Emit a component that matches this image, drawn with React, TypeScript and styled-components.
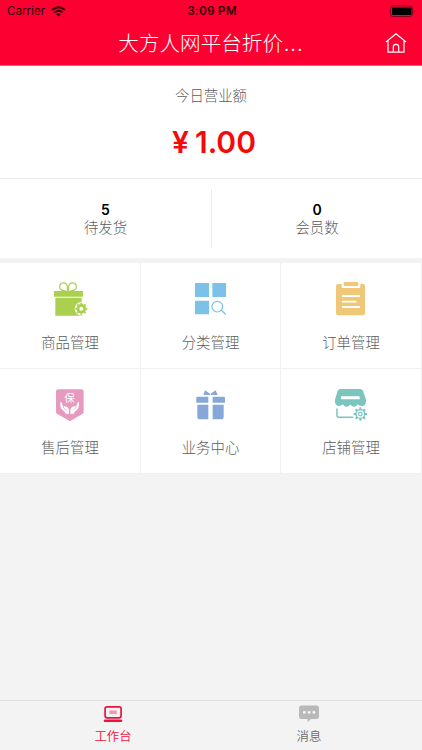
import React from "react";
import styled, { createGlobalStyle } from "styled-components";

const Global = createGlobalStyle`
  * { box-sizing: border-box; }
  body { margin: 0; background: #f3f3f3; }
`;

const Page = styled.div`
  width: 422px;
  height: 750px;
  display: flex;
  flex-direction: column;
  overflow: hidden;
  background: #f3f3f3;
  color: #777;
  font-family: Inter, "Noto Sans CJK SC", sans-serif;
`;

const Header = styled.header`
  height: 66px;
  flex: none;
  background: #fc0032;
  border-bottom: 1px solid #fd5c7a;
`;

const StatusBar = styled.div`
  height: 22px;
  display: grid;
  grid-template-columns: 1fr auto 1fr;
  align-items: center;
  padding: 0 5px 0 7px;
  color: #2c0009;
  font-size: 11.6px;
  line-height: 22px;
`;

const Carrier = styled.div`
  display: flex;
  align-items: center;
  gap: 6px;
`;

const Clock = styled.div`
  font-weight: 600;
  font-size: 11.8px;
  letter-spacing: 0.2px;
`;

const BatterySlot = styled.div`
  display: flex;
  justify-content: flex-end;
`;

const NavBar = styled.div`
  height: 42px;
  display: grid;
  grid-template-columns: 40px 1fr 40px;
  align-items: center;
  padding: 0 6px;
`;

const Title = styled.h1`
  grid-column: 2;
  margin: 0;
  text-align: center;
  color: #fff;
  font: 300 20.6px/40px "Noto Sans CJK SC", sans-serif;
  height: 42px;
  white-space: nowrap;
`;

const Dots = styled.span`
  letter-spacing: 1.4px;
  margin-left: 1px;
`;

const HomeButton = styled.button`
  border: 0;
  padding: 0;
  background: none;
  display: flex;
  justify-content: center;
`;

const Revenue = styled.section`
  height: 113px;
  flex: none;
  background: #fff;
  border-bottom: 1px solid #ececec;
  display: flex;
  flex-direction: column;
  align-items: center;
  padding-top: 19px;
`;

const Label = styled.div`
  font: 300 14.4px/20px "Noto Sans CJK SC", sans-serif;
  color: #5c5c5c;
`;

const Amount = styled.div`
  margin: 17px 0 0 6px;
  display: flex;
  gap: 6px;
  font-size: 30px;
  line-height: 40px;
  font-weight: 600;
  color: #f50a0a;
`;

const Stats = styled.section`
  height: 79px;
  flex: none;
  background: #fff;
  display: grid;
  grid-template-columns: 212px 1fr;
  padding: 10px 0;
`;

const Stat = styled.div<{ $divided?: boolean }>`
  display: flex;
  flex-direction: column;
  align-items: center;
  padding-top: 14px;
  border-right: ${(p) => (p.$divided ? "1px solid #ececec" : "0")};
`;

const StatValue = styled.strong`
  font: 600 14px/14px Inter, sans-serif;
  color: #000;
`;

const Menu = styled.main`
  margin-top: 5px;
  display: grid;
  grid-template-columns: 141px 140px 141px;
  grid-template-rows: 106px 105px;
`;

const MenuItem = styled.div`
  background: #fff;
  border-right: 1px solid #f0f0f0;
  border-bottom: 1px solid #f0f0f0;
  display: flex;
  flex-direction: column;
  align-items: center;
  padding-top: 16px;
  gap: 13px;

  &:nth-child(n + 4) { gap: 12px; }
  &:nth-child(3n + 2) svg { margin-right: 1px; }
  &:nth-child(3n) svg { margin-right: 2px; }
`;

const TabBar = styled.footer`
  margin-top: auto;
  height: 50px;
  border-top: 1px solid #dfdfdf;
  display: grid;
  grid-template-columns: 1fr 1fr;
  justify-items: center;
  padding: 0 15px;
  background: #f3f3f3;
`;

const Tab = styled.div<{ $active?: boolean }>`
  display: flex;
  flex-direction: column;
  align-items: center;
  padding-top: 2px;
  gap: 3px;
  font: 350 12.4px/18px "Noto Sans CJK SC", sans-serif;
  color: ${(p) => (p.$active ? "#e6143e" : "#6c6c6c")};
`;

const ShieldText = styled.text`
  font: 350 32px "Noto Sans CJK SC", sans-serif;
  fill: #fff;
`;

const teeth = [0, 45, 90, 135, 180, 225, 270, 315];

function Gear({ x, y, color, hollow }: { x: number; y: number; color: string; hollow?: boolean }) {
  return (
    <g transform={`translate(${x} ${y})`}>
      {teeth.map((a) => (
        <rect key={a} x={-3} y={hollow ? -20 : -18} width={6} height={8} rx={1} fill={color} transform={`rotate(${a})`} />
      ))}
      <circle r={hollow ? 13 : 10} fill="#fff" stroke={color} strokeWidth={hollow ? 4 : 8} />
      {hollow && <circle r={5.5} fill="#fff" stroke={color} strokeWidth={3.5} />}
    </g>
  );
}

function Goods() {
  return (
    <>
      <g fill="none" stroke="#abcf4e" strokeWidth="3.5">
        <path d="M108 51C96 50 89 46 89 38C89 24 109 22 112 37V51" />
        <path d="M120 51C132 50 139 46 139 38C139 24 119 22 116 37V51" />
      </g>
      <path d="M72 51H159V68H72ZM76 71H155V125H76Z" fill="#abcf4e" />
      <circle cx="154" cy="104" r="20" fill="#fff" />
      <Gear x={154} y={104} color="#abcf4e" />
    </>
  );
}

function Category() {
  return (
    <>
      <path d="M75 27H117V69H75ZM127 27H168V69H127ZM75 80H117V121H75Z" fill="#7cc2e8" />
      <g fill="none" stroke="#7cc2e8" strokeLinecap="round">
        <circle cx="142" cy="98" r="16" strokeWidth="3.5" />
        <path d="M154 109L166 120" strokeWidth="4" />
      </g>
    </>
  );
}

function Order() {
  return (
    <>
      <path d="M84 30H95V38Q95 42 99 42H147Q151 42 151 38V30H160Q165 30 165 36V118Q165 124 159 124H84Q78 124 78 118V36Q78 30 84 30Z" fill="#f0c777" />
      <rect x="101" y="24" width="44" height="12" rx="3" fill="#f0c777" />
      <path d="M96 66H150M96 83H139M96 99H150" stroke="#fff" strokeWidth="5.5" />
    </>
  );
}

function Service() {
  return (
    <>
      <path d="M85 28H155Q161 28 161 34V96Q161 100 157 102L120 124L82 102Q78 100 78 96V34Q78 28 85 28Z" fill="#e79ac0" />
      <ShieldText x="103" y="66">保</ShieldText>
      <g fill="#fff">
        <path d="M91 66Q95 65 97 72L99 80Q108 76 115 84Q118 88 117 101H107Q105 95 98 91Q92 86 91 77Z" />
        <path d="M147 66Q143 65 141 72L139 80Q130 76 123 84Q120 88 121 101H131Q133 95 140 91Q146 86 147 77Z" />
      </g>
      <g fill="none" stroke="#e79ac0" strokeWidth="2">
        <path d="M99 81L109 91M139 81L129 91" />
      </g>
    </>
  );
}

function Business() {
  return (
    <g fill="#86a7d8">
      <path d="M82 50H115V68H79V54Q79 50 82 50ZM128 50H161Q165 50 165 54V68H128ZM82 74H115V118H90Q82 118 82 110ZM128 74H161V110Q161 118 153 118H128Z" />
      <path d="M105 31L120 41V45H100ZM137 31L122 41V45H143Z" />
    </g>
  );
}

function Shop() {
  return (
    <>
      <path d="M91 27H151Q156 27 159 32L168 59Q169 74 160 77Q151 81 143 73Q137 83 127 79L121 74Q114 81 107 80Q102 79 98 73Q91 80 83 77Q73 73 75 59L83 32Q86 27 91 27Z" fill="#7cc4be" />
      <rect x="93" y="49" width="56" height="9" rx="2" fill="#fff" />
      <path d="M81 87V107Q81 112 86 112H128" fill="none" stroke="#7cc4be" strokeWidth="4.5" strokeLinecap="round" />
      <Gear x={151} y={102} color="#7cc4be" hollow />
    </>
  );
}

const entries = [
  { name: "商品管理", Art: Goods },
  { name: "分类管理", Art: Category },
  { name: "订单管理", Art: Order },
  { name: "售后管理", Art: Service },
  { name: "业务中心", Art: Business },
  { name: "店铺管理", Art: Shop },
];

export default function App() {
  return (
    <Page>
      <Global />
      <Header>
        <StatusBar>
          <Carrier>
            Carrier
            <svg width="15" height="11" viewBox="0 0 15 11">
              <g fill="none" stroke="#2c0009" strokeWidth="2">
                <path d="M1 4.1Q7.5 -1.6 14 4.1" />
                <path d="M3.4 6.6Q7.5 3 11.6 6.6" />
              </g>
              <path d="M5.2 8.2Q7.5 6.3 9.8 8.2L7.5 10.6Z" fill="#2c0009" />
            </svg>
          </Carrier>
          <Clock>3:09 PM</Clock>
          <BatterySlot>
            <svg width="28" height="13" viewBox="0 0 28 13">
              <rect x="1.5" y="1" width="22" height="10.5" rx="2.5" fill="none" stroke="#8c001c" />
              <rect x="3" y="2.5" width="19.5" height="7.5" rx="1" fill="#000" />
              <path d="M25.5 4.5Q27 6.3 25.5 8Z" fill="#8c001c" />
            </svg>
          </BatterySlot>
        </StatusBar>
        <NavBar>
          <Title>
            大方人网平台折价<Dots>...</Dots>
          </Title>
          <HomeButton aria-label="首页">
            <svg width="22" height="22" viewBox="0 0 22 22" fill="none" stroke="#fff" strokeWidth="1.2" strokeLinejoin="round" strokeLinecap="round">
              <path d="M1.3 9.7L11 1.7L20.7 9.7M3 8.8V20.2H19V8.8M8.3 20V15Q8.3 12.3 11 12.3Q13.7 12.3 13.7 15V20" />
            </svg>
          </HomeButton>
        </NavBar>
      </Header>
      <Revenue>
        <Label>今日营业额</Label>
        <Amount>
          <span>¥</span>
          <span>1.00</span>
        </Amount>
      </Revenue>
      <Stats>
        <Stat $divided>
          <StatValue>5</StatValue>
          <Label>待发货</Label>
        </Stat>
        <Stat>
          <StatValue>0</StatValue>
          <Label>会员数</Label>
        </Stat>
      </Stats>
      <Menu>
        {entries.map(({ name, Art }) => (
          <MenuItem key={name}>
            <svg width="40" height="40" viewBox="60 15 120 120">
              <Art />
            </svg>
            <Label>{name}</Label>
          </MenuItem>
        ))}
      </Menu>
      <TabBar>
        <Tab $active>
          <svg width="20" height="21" viewBox="0 0 20 21">
            <rect x="2.1" y="3.8" width="16" height="11" rx="2" fill="none" stroke="#e6143e" strokeWidth="1.7" />
            <rect x="6.4" y="7.5" width="7.4" height="3.6" fill="#ef9aaa" />
            <rect x="0.7" y="16.6" width="18.6" height="2.4" rx="1.2" fill="#e6143e" />
          </svg>
          工作台
        </Tab>
        <Tab>
          <svg width="22" height="21" viewBox="0 0 22 21">
            <path d="M3.5 2.5H18.5Q21 2.5 21 5V13.5Q21 16 18.5 16H13L9.5 19V16H3.5Q1 16 1 13.5V5Q1 2.5 3.5 2.5Z" fill="#b9b9b9" />
            <path d="M5 8.3H7.6V10.6H5ZM9.8 8.3H12.4V10.6H9.8ZM14.6 8.3H17.2V10.6H14.6Z" fill="#fff" />
          </svg>
          消息
        </Tab>
      </TabBar>
    </Page>
  );
}
